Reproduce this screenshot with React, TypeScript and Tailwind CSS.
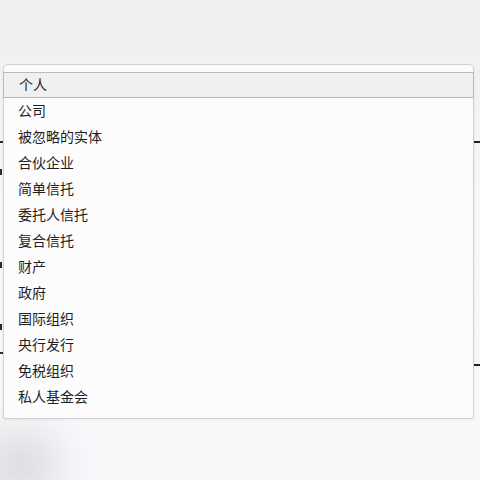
const options = [
  "个人",
  "公司",
  "被忽略的实体",
  "合伙企业",
  "简单信托",
  "委托人信托",
  "复合信托",
  "财产",
  "政府",
  "国际组织",
  "央行发行",
  "免税组织",
  "私人基金会",
];

// slivers of the form that sits behind the open menu
const behind = [
  { cls: "h-[2px]", left: "w-[4px]", right: "w-[7px]" },
  { cls: "h-[6px] mt-[26px]", left: "w-[2px]", right: "w-0" },
  { cls: "h-[6px] mt-[87px]", left: "w-[2px]", right: "w-0" },
  { cls: "h-[6px] mt-[56px]", left: "w-[2px]", right: "w-0" },
  { cls: "h-[2px] mt-[22px]", left: "w-[3px]", right: "w-0" },
  { cls: "h-[2px] mt-[10px]", left: "w-0", right: "w-[7px]" },
];

export default function App() {
  return (
    <div
      className="relative w-[480px] h-[480px] overflow-hidden bg-gradient-to-b from-[#eeeff1] via-[#f7f8fa] to-[#f8f9fb]"
      style={{ fontFamily: '"Noto Sans CJK SC", "Noto Sans", sans-serif' }}
    >
      <div className="flex flex-col pt-[141px]">
        {behind.map((b, i) => (
          <div key={i} className={"flex justify-between " + b.cls}>
            <div className={"h-full bg-[#2a2a2a] " + b.left} />
            <div className={"h-full bg-[#222] " + b.right} />
          </div>
        ))}
      </div>
      <div className="absolute -left-[20px] top-[430px] h-[70px] w-[80px] rounded-full bg-[#dcdcdf] blur-[20px]" />

      <div className="absolute left-[3px] top-[64px] w-[471px] h-[355px] rounded-t-[5px] rounded-b-[2px] border border-[#cfd0d3] bg-[#fcfcfd] pt-[7px] shadow-[0_1px_3px_rgba(0,0,0,0.06)]">
        <ul className="flex flex-col text-[14px] leading-none text-[#1f1f1f]">
          {options.map((label, i) => (
            <li
              key={label}
              className={
                i === 0
                  ? "-mx-px flex h-[26px] items-center border border-[#b9babd] bg-[#f0f0f1] pl-[15px] pb-[2px]"
                  : "flex h-[26px] items-center pl-[14px] pb-[3px]"
              }
            >
              {label}
            </li>
          ))}
        </ul>
      </div>
    </div>
  );
}
